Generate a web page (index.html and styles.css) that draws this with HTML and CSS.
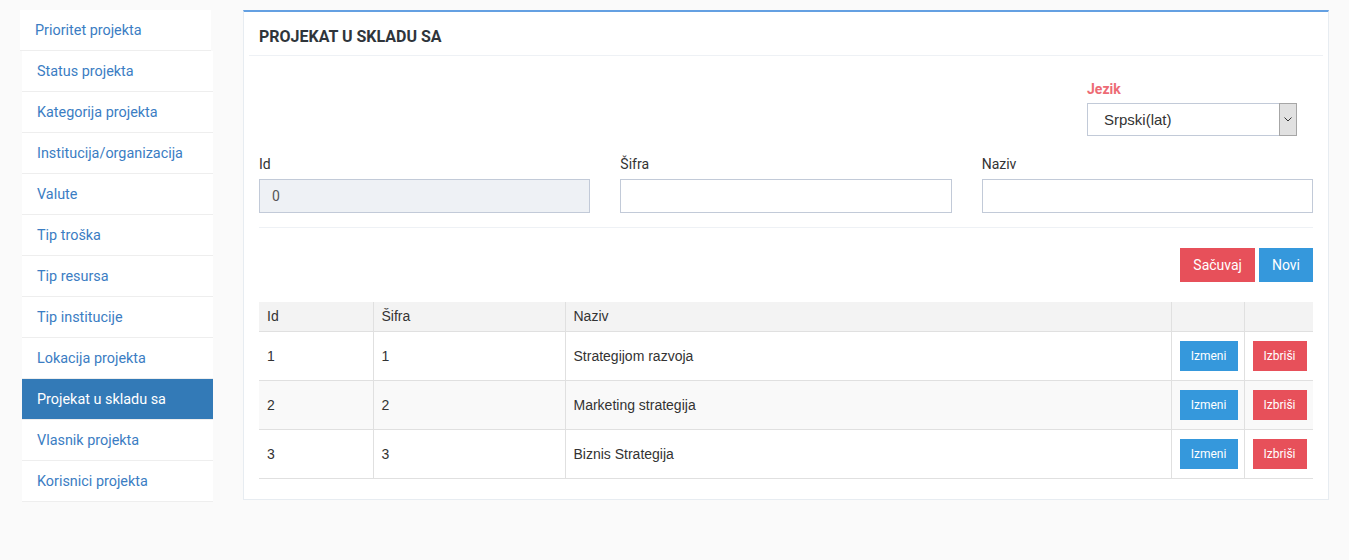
FILE: index.html
```html
<!DOCTYPE html>
<html>
<head>
<meta charset="utf-8">
<link rel="stylesheet" href="styles.css">
</head>
<body>
<div class="layout">
  <nav class="sidebar">
    <a class="nav-item first">Prioritet projekta</a>
    <a class="nav-item">Status projekta</a>
    <a class="nav-item">Kategorija projekta</a>
    <a class="nav-item">Institucija/organizacija</a>
    <a class="nav-item">Valute</a>
    <a class="nav-item">Tip troška</a>
    <a class="nav-item">Tip resursa</a>
    <a class="nav-item">Tip institucije</a>
    <a class="nav-item">Lokacija projekta</a>
    <a class="nav-item active">Projekat u skladu sa</a>
    <a class="nav-item">Vlasnik projekta</a>
    <a class="nav-item">Korisnici projekta</a>
  </nav>
  <main class="panel">
    <div class="panel-head">PROJEKAT U SKLADU SA</div>
    <div class="panel-body">
      <div class="lang-row">
        <div class="lang-group">
          <label class="lang-label">Jezik</label>
          <div class="select-wrap">
            <select class="select"><option>Srpski(lat)</option></select>
            <span class="select-arrow"><svg width="8" height="5" viewBox="0 0 8 5"><path d="M0.5 0.5 L4 4 L7.5 0.5" fill="none" stroke="#333" stroke-width="1"/></svg></span>
          </div>
        </div>
      </div>
      <div class="form-row">
        <div class="field">
          <label class="field-label">Id</label>
          <input class="input readonly" value="0" readonly>
        </div>
        <div class="field">
          <label class="field-label">Šifra</label>
          <input class="input">
        </div>
        <div class="field">
          <label class="field-label">Naziv</label>
          <input class="input">
        </div>
      </div>
      <hr class="sep">
      <div class="actions">
        <button class="btn red">Sačuvaj</button>
        <button class="btn blue">Novi</button>
      </div>
      <table class="grid">
        <colgroup>
          <col class="c-id"><col class="c-sifra"><col class="c-naziv"><col class="c-edit"><col class="c-del">
        </colgroup>
        <thead>
          <tr><th>Id</th><th>Šifra</th><th>Naziv</th><th></th><th></th></tr>
        </thead>
        <tbody>
          <tr><td>1</td><td>1</td><td>Strategijom razvoja</td><td><button class="btn-sm blue">Izmeni</button></td><td><button class="btn-sm red">Izbriši</button></td></tr>
          <tr class="odd"><td>2</td><td>2</td><td>Marketing strategija</td><td><button class="btn-sm blue">Izmeni</button></td><td><button class="btn-sm red">Izbriši</button></td></tr>
          <tr><td>3</td><td>3</td><td>Biznis Strategija</td><td><button class="btn-sm blue">Izmeni</button></td><td><button class="btn-sm red">Izbriši</button></td></tr>
        </tbody>
      </table>
    </div>
  </main>
</div>
</body>
</html>
```
FILE: styles.css
```css
* { box-sizing: border-box; }
html, body { margin: 0; padding: 0; }
body {
  background: #fafafa;
  font-family: Roboto, "Liberation Sans", sans-serif;
  font-size: 14px;
  color: #333;
}
.layout {
  display: flex;
  align-items: flex-start;
  padding-top: 10px;
}
.sidebar {
  width: 191px;
  margin-left: 22px;
  display: flex;
  flex-direction: column;
}
.nav-item {
  display: block;
  height: 41px;
  line-height: 42px;
  overflow: hidden;
  padding-left: 15px;
  background: #fff;
  color: #3b7dc3;
  border-bottom: 1px solid #eeeeee;
  text-decoration: none;
  font-size: 14.4px;
}
.nav-item.first { margin-left: -2px; margin-right: 2px; }
.nav-item.active { background: #337ab7; color: #fff; }

.panel {
  margin-left: 30px;
  width: 1086px;
  background: #fff;
  border: 1px solid #e7ecf1;
  border-top: 2px solid #64a0e2;
  padding: 0 5px 20px;
}
.panel-head {
  height: 44px;
  padding-top: 6px;
  line-height: 37px;
  padding-left: 10px;
  font-weight: 700;
  font-size: 16px;
  color: #2f353b;
  border-bottom: 1px solid #eef1f5;
}
.panel-body { padding: 0 10px; }

.lang-row {
  display: flex;
  justify-content: flex-end;
  padding-top: 23px;
}
.lang-group { width: 210px; margin-right: 16px; }
.lang-label {
  display: block;
  line-height: 20px;
  margin-bottom: 4px;
  color: #ed6b75;
  font-weight: 700;
}
.select-wrap {
  display: flex;
  height: 33px;
}
.select {
  flex: 1;
  min-width: 0;
  appearance: none;
  -webkit-appearance: none;
  border: 1px solid #c2cad8;
  border-right: none;
  background: #fff;
  padding: 0 0 0 16px;
  font-family: "Liberation Sans", Arial, sans-serif;
  font-size: 15px;
  color: #333;
  border-radius: 0;
}
.select-arrow {
  width: 18px;
  background: #e1e1e1;
  border: 1px solid #a6a6a6;
  display: flex;
  align-items: center;
  justify-content: center;
}

.form-row {
  display: flex;
  gap: 30px;
  margin-top: 18px;
}
.field { flex: 1; }
.field-label {
  display: block;
  line-height: 20px;
  margin-bottom: 5px;
  color: #333;
}
.input {
  display: block;
  width: 100%;
  height: 34px;
  border: 1px solid #c2cad8;
  padding: 0 12px;
  font-family: Roboto, sans-serif;
  font-size: 14px;
  color: #555;
  background: #fff;
  border-radius: 0;
  outline: none;
}
.input.readonly { background: #eef1f5; }
.sep {
  border: 0;
  border-top: 1px solid #eef1f5;
  margin: 14px 0 20px;
}
.actions {
  display: flex;
  justify-content: flex-end;
  gap: 4px;
}
.btn {
  height: 34px;
  border: 0;
  padding: 0 13px;
  font-family: Roboto, sans-serif;
  font-size: 14px;
  color: #fff;
  border-radius: 0;
}
.red { background: #e7505a; color: #fff; }
.blue { background: #3598dc; color: #fff; }

.grid {
  margin-top: 20px;
  width: 100%;
  table-layout: fixed;
  border-collapse: collapse;
  font-family: "Liberation Sans", Arial, sans-serif;
  font-size: 14px;
  color: #333;
}
.c-id { width: 114px; }
.c-sifra { width: 192px; }
.c-naziv { width: 606px; }
.c-edit { width: 73px; }
.c-del { width: 69px; }
.grid th {
  background: #f3f3f3;
  text-align: left;
  font-weight: 400;
  height: 29px;
  padding: 0 8px;
  border: 1px solid #e0e0e0;
  border-top: 0;
}
.grid td {
  height: 49px;
  padding: 0 8px;
  border: 1px solid #e0e0e0;
  border-top: 0;
  vertical-align: middle;
}
.grid th:first-child, .grid td:first-child { border-left: 0; }
.grid th:last-child, .grid td:last-child { border-right: 0; }
.grid tr.odd td { background: #f9f9f9; }
.btn-sm {
  display: block;
  height: 30px;
  border: 0;
  padding: 0 10px;
  font-family: Roboto, sans-serif;
  font-size: 12px;
  border-radius: 0;
}
.grid td:nth-child(4) .btn-sm { width: 58px; }
.grid td:nth-child(5) .btn-sm { width: 54px; }
```
